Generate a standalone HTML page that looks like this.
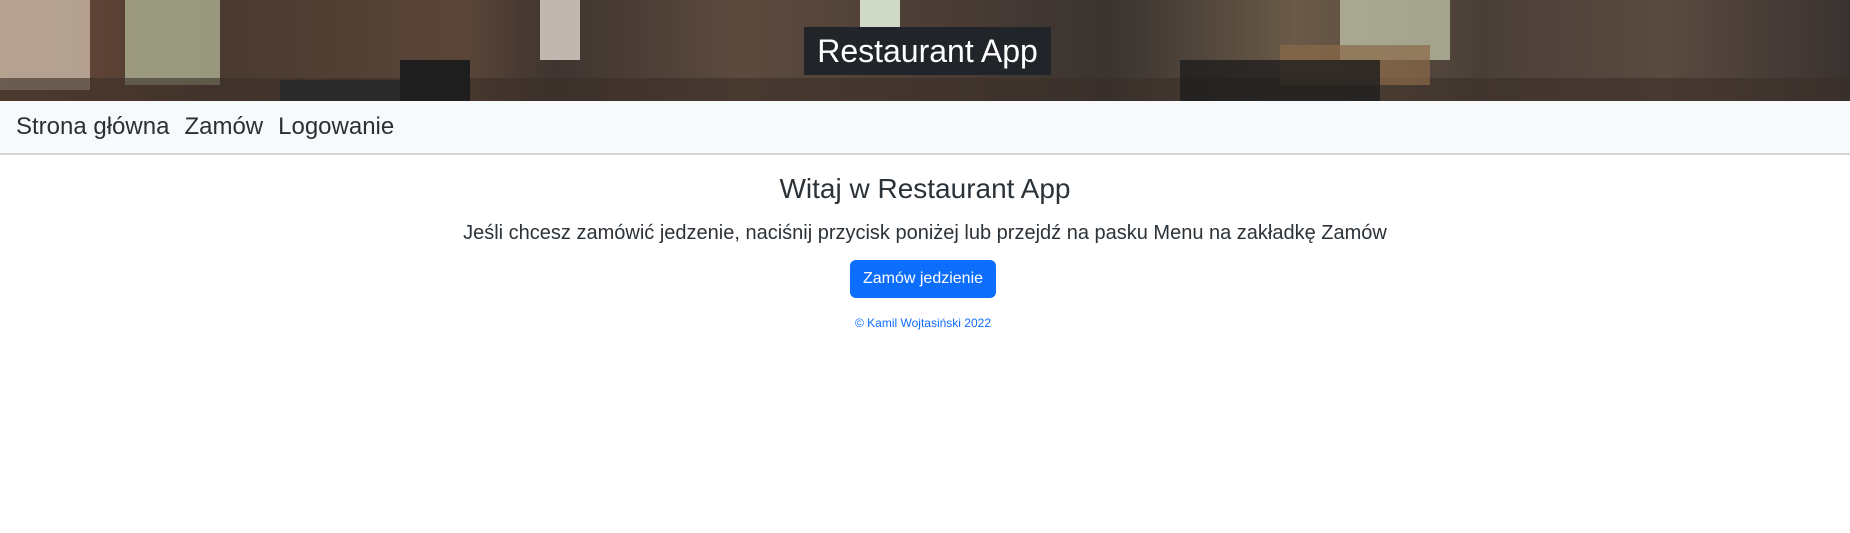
<!DOCTYPE html>
<html><head><meta charset="utf-8"><style>
html,body{margin:0;padding:0;background:#fff;font-family:"Liberation Sans",Arial,sans-serif;width:1850px;height:533px;overflow:hidden}
.hero{position:relative;height:101px;background:linear-gradient(90deg,#6b4a3a 0,#4a3a30 12%,#5a4538 25%,#3f3430 30%,#5c4a3e 40%,#4c3e36 50%,#3a3330 60%,#6a5a48 70%,#4a3f38 80%,#5a4a40 90%,#3a3230 100%);overflow:hidden}
.hero div{position:absolute}
.title{left:804px;top:27px;width:247px;height:48px;background:#212529;color:#fff;font-size:32px;line-height:48px;text-align:center}
nav{height:52px;background:#f8f9fa;border-bottom:2px solid #d3d5d7;display:flex;align-items:center;padding-left:16px;font-size:24px;color:#2b3035}
nav span{margin-right:15px}
h1{font-weight:400;font-size:28px;color:#2b3238;text-align:center;margin:17px 0 0;line-height:34px}
p{font-size:20px;color:#2b3238;text-align:center;margin:14px 0 0;line-height:26px}
.btn{display:block;margin:14px auto 0;width:146px;height:38px;background:#0d6efd;color:#fff;border-radius:6px;font-size:16px;line-height:38px;text-align:center;position:relative;left:-2px}
.f{text-align:center;color:#0d6efd;font-size:12px;margin-top:18px;position:relative;left:-2px}
</style></head><body>
<div class="hero">
<div style="left:0;top:0;width:90px;height:90px;background:#c8b8a8;opacity:.8"></div>
<div style="left:125px;top:0;width:95px;height:85px;background:#b8c0a0;opacity:.7"></div>
<div style="left:540px;top:0;width:40px;height:60px;background:#e0d8d0;opacity:.8"></div>
<div style="left:860px;top:0;width:40px;height:30px;background:#d0d8c8"></div>
<div style="left:1340px;top:0;width:110px;height:60px;background:#c8ccb0;opacity:.7"></div>
<div style="left:0;top:78px;width:1850px;height:23px;background:#3a2e28;opacity:.6"></div>
<div style="left:280px;top:80px;width:120px;height:21px;background:#2a2a2a"></div>
<div style="left:1280px;top:45px;width:150px;height:40px;background:#8a6a48;opacity:.7"></div>
<div style="left:400px;top:60px;width:70px;height:41px;background:#1e1e1e"></div>
<div style="left:1180px;top:60px;width:200px;height:41px;background:#1e1e1e;opacity:.8"></div>
<div class="title">Restaurant App</div>
</div>
<nav><span>Strona główna</span><span>Zamów</span><span>Logowanie</span></nav>
<h1>Witaj w Restaurant App</h1>
<p>Jeśli chcesz zamówić jedzenie, naciśnij przycisk poniżej lub przejdź na pasku Menu na zakładkę Zamów</p>
<div class="btn">Zamów jedzienie</div>
<div class="f">© Kamil Wojtasiński 2022</div>
</body></html>
